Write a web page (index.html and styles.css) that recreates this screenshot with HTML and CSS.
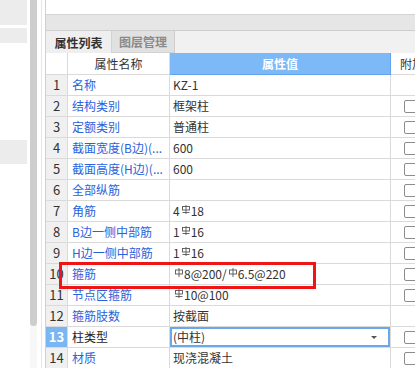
FILE: index.html
```html
<!DOCTYPE html>
<html lang="zh-CN">
<head>
<meta charset="utf-8">
<title>属性列表</title>
<link rel="stylesheet" href="styles.css">
</head>
<body>
<div class="app">
  <aside class="left">
    <div class="blk b1"></div>
    <div class="blk b2"></div>
    <div class="blk b3"></div>
  </aside>
  <div class="scroll"><div class="thumb"></div></div>
  <div class="gutter"></div>
  <main class="panel">
    <div class="top"></div>
    <div class="band"></div>
    <div class="tabs">
      <div class="tab on">属性列表</div>
      <div class="tab off">图层管理</div>
    </div>
    <div class="grid">
      <div class="c hd"></div>
      <div class="c hd center">属性名称</div>
      <div class="c hd hv center">属性值</div>
      <div class="c hd ext">附加</div>

      <div class="c num">1</div><div class="c nm">名称</div><div class="c vl">KZ-1</div><div class="c ex"></div>
      <div class="c num">2</div><div class="c nm">结构类别</div><div class="c vl">框架柱</div><div class="c ex"><span class="cb"></span></div>
      <div class="c num">3</div><div class="c nm">定额类别</div><div class="c vl">普通柱</div><div class="c ex"><span class="cb"></span></div>
      <div class="c num">4</div><div class="c nm">截面宽度(B边)(...</div><div class="c vl">600</div><div class="c ex"><span class="cb"></span></div>
      <div class="c num">5</div><div class="c nm">截面高度(H边)(...</div><div class="c vl">600</div><div class="c ex"><span class="cb"></span></div>
      <div class="c num">6</div><div class="c nm">全部纵筋</div><div class="c vl"></div><div class="c ex"><span class="cb"></span></div>
      <div class="c num">7</div><div class="c nm">角筋</div><div class="c vl">4<svg class="rb" viewBox="0 0 8 9" width="8" height="9" role="img" aria-label="Φ"><rect x="0.5" y="1.5" width="7" height="3.5" fill="none" stroke="currentColor" stroke-width="0.9"/><line x1="4" y1="0" x2="4" y2="9" stroke="currentColor" stroke-width="0.9"/><line x1="0.5" y1="7.5" x2="7.5" y2="7.5" stroke="currentColor" stroke-width="0.9"/></svg>18</div><div class="c ex"><span class="cb"></span></div>
      <div class="c num">8</div><div class="c nm">B边一侧中部筋</div><div class="c vl">1<svg class="rb" viewBox="0 0 8 9" width="8" height="9" role="img" aria-label="Φ"><rect x="0.5" y="1.5" width="7" height="3.5" fill="none" stroke="currentColor" stroke-width="0.9"/><line x1="4" y1="0" x2="4" y2="9" stroke="currentColor" stroke-width="0.9"/><line x1="0.5" y1="7.5" x2="7.5" y2="7.5" stroke="currentColor" stroke-width="0.9"/></svg>16</div><div class="c ex"><span class="cb"></span></div>
      <div class="c num">9</div><div class="c nm">H边一侧中部筋</div><div class="c vl">1<svg class="rb" viewBox="0 0 8 9" width="8" height="9" role="img" aria-label="Φ"><rect x="0.5" y="1.5" width="7" height="3.5" fill="none" stroke="currentColor" stroke-width="0.9"/><line x1="4" y1="0" x2="4" y2="9" stroke="currentColor" stroke-width="0.9"/><line x1="0.5" y1="7.5" x2="7.5" y2="7.5" stroke="currentColor" stroke-width="0.9"/></svg>16</div><div class="c ex"><span class="cb"></span></div>
      <div class="c num">10</div><div class="c nm">箍筋</div><div class="c vl"><svg class="rb" viewBox="0 0 8 9" width="8" height="9" role="img" aria-label="Φ"><rect x="0.5" y="2" width="7" height="4" fill="none" stroke="currentColor" stroke-width="0.9"/><line x1="4" y1="0" x2="4" y2="9" stroke="currentColor" stroke-width="0.9"/></svg>8@200/<svg class="rb" viewBox="0 0 8 9" width="8" height="9" role="img" aria-label="Φ"><rect x="0.5" y="2" width="7" height="4" fill="none" stroke="currentColor" stroke-width="0.9"/><line x1="4" y1="0" x2="4" y2="9" stroke="currentColor" stroke-width="0.9"/></svg>6.5@220</div><div class="c ex"><span class="cb"></span></div>
      <div class="c num">11</div><div class="c nm">节点区箍筋</div><div class="c vl"><svg class="rb" viewBox="0 0 8 9" width="8" height="9" role="img" aria-label="Φ"><rect x="0.5" y="1.5" width="7" height="3.5" fill="none" stroke="currentColor" stroke-width="0.9"/><line x1="4" y1="0" x2="4" y2="9" stroke="currentColor" stroke-width="0.9"/><line x1="0.5" y1="7.5" x2="7.5" y2="7.5" stroke="currentColor" stroke-width="0.9"/></svg>10@100</div><div class="c ex"><span class="cb"></span></div>
      <div class="c num">12</div><div class="c nm">箍筋肢数</div><div class="c vl">按截面</div><div class="c ex"></div>
      <div class="c num sel">13</div><div class="c nm dark">柱类型</div><div class="c vl combo-cell"><div class="combo"><span>(中柱)</span><span class="arrow"></span></div></div><div class="c ex"><span class="cb"></span></div>
      <div class="c num">14</div><div class="c nm">材质</div><div class="c vl">现浇混凝土</div><div class="c ex"><span class="cb"></span></div>
    </div>
    <div class="highlight"></div>
  </main>
</div>
</body>
</html>
```
FILE: styles.css
```css
html, body {
  margin: 0;
  padding: 0;
}
body {
  width: 415px;
  height: 368px;
  overflow: hidden;
  background: #fff;
  font-family: "Noto Sans CJK SC", "Noto Sans", sans-serif;
  font-size: 12px;
  color: #333;
}
.app {
  display: flex;
  height: 368px;
}
.left {
  width: 27px;
  flex: none;
  display: flex;
  flex-direction: column;
}
.blk { background: #ececec; }
.b1 { height: 25px; }
.b2 { height: 15px; margin-top: 3px; }
.b3 { height: 24px; margin-top: 97px; }

.scroll {
  width: 7px;
  margin-left: 3px;
  flex: none;
  background: #f7f7f7;
}
.thumb {
  height: 326px;
  background: #cdcdcd;
  border-radius: 0 0 4px 4px;
}
.gutter {
  margin-left: 4px;
  width: 3px;
  flex: none;
  border-left: 1px solid #e6e6e6;
}
.panel {
  flex: 1;
  min-width: 0;
  position: relative;
  overflow: hidden;
  border-left: 1px solid #d0d0d0;
  display: flex;
  flex-direction: column;
}
.top {
  height: 14px;
  flex: none;
  border-bottom: 1px solid #d4d4d4;
}
.band {
  height: 15px;
  flex: none;
  background: #e6e6e6;
  border-bottom: 1px solid #cfcfcf;
}
.tabs {
  height: 22px;
  flex: none;
  background: #f1f1f1;
  display: flex;
}
.tab {
  display: flex;
  align-items: center;
  justify-content: center;
  font-weight: bold;
  font-size: 12px;
}
.tab.on {
  width: 65px;
  color: #333;
  background: #efefef;
  border-right: 1px solid #d3d3d3;
}
.tab.off {
  width: 63px;
  color: #8a8a8a;
  background: #e1e1e1;
  border-right: 1px solid #cdcdcd;
  border-bottom: 1px solid #d3d3d3;
  box-sizing: border-box;
}
.grid {
  display: grid;
  grid-template-columns: 22px 102px 221px 60px;
  grid-template-rows: 22px;
  grid-auto-rows: 21px;
}
.c {
  box-sizing: border-box;
  border-right: 1px solid #dadada;
  border-bottom: 1px solid #dadada;
  display: flex;
  align-items: center;
  white-space: nowrap;
  overflow: hidden;
  background: #fff;
  line-height: 16px;
}
.hd { color: #333; }
.center { justify-content: center; }
.hv {
  background: #7db9f6;
  color: #fff;
  font-weight: bold;
  border-right-color: #5fa4ec;
  border-bottom-color: #5fa4ec;
}
.ext { padding-left: 9px; }
.num {
  background: #f0f0f0;
  justify-content: center;
  font-size: 13px;
  color: #333;
}
.num.sel {
  background: #7ab6f4;
  color: #fff;
  font-weight: bold;
}
.nm {
  color: #2a62dc;
  padding-left: 4px;
}
.nm.dark { color: #222; }
.vl {
  padding-left: 3px;
  color: #333;
}
.rb {
  display: inline-block;
  margin: 0 1px 3px 2px;
  color: #555;
  flex: none;
}
.ex { border-right: none; }
.cb {
  width: 13px;
  height: 13px;
  margin-left: 13px;
  box-sizing: border-box;
  border: 1px solid #8c8c8c;
  border-radius: 2px;
  background: #fff;
}
.combo-cell {
  padding: 0;
}
.combo {
  flex: 1;
  align-self: stretch;
  box-sizing: border-box;
  border: 2px solid #6aa8ea;
  display: flex;
  align-items: center;
  justify-content: space-between;
  padding: 0 11px 0 1px;
}
.arrow {
  width: 0;
  height: 0;
  border-left: 3px solid transparent;
  border-right: 3px solid transparent;
  border-top: 3px solid #555;
}
.highlight {
  position: absolute;
  left: 13px;
  top: 262px;
  width: 257px;
  height: 27px;
  box-sizing: border-box;
  border: 3px solid #f01515;
  pointer-events: none;
}
```
